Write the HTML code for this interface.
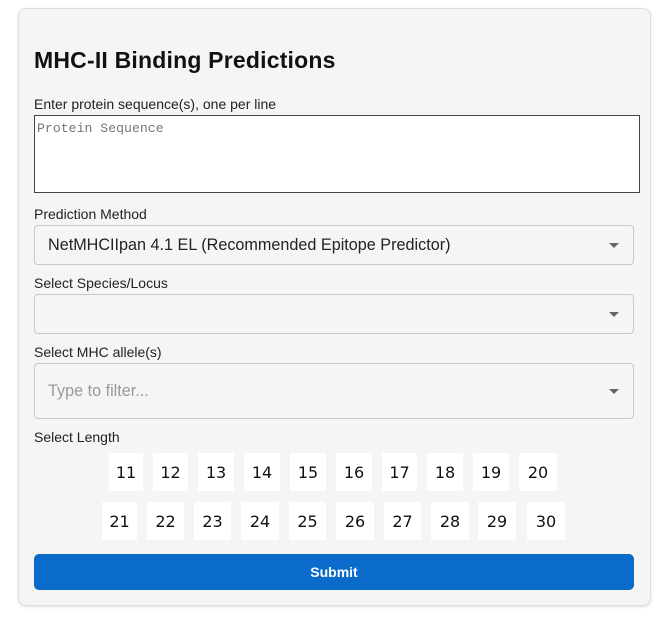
<!DOCTYPE html>
<html><head><style>
*{box-sizing:border-box;margin:0;padding:0}
body{width:666px;height:622px;background:#fff;font-family:"Liberation Sans",sans-serif;position:relative;overflow:hidden}
.card{position:absolute;left:18px;top:8px;width:633px;height:598px;background:#f5f5f5;border:1px solid #ddd;border-radius:8px;box-shadow:0 1px 3px rgba(0,0,0,.12)}
h1{position:absolute;left:34px;top:47px;font-size:23px;font-weight:bold;color:#111;font-family:"Liberation Sans",sans-serif;letter-spacing:0.2px}
.lbl{position:absolute;left:34px;font-size:14px;color:#222}
.ta{position:absolute;left:34px;top:115px;width:606px;height:78px;background:#fff;border:1px solid #444;font-family:"Liberation Mono",monospace;font-size:13.2px;color:#777;padding:5px 2px}
.sel{position:absolute;left:34px;width:600px;border:1px solid #c8c8c8;border-radius:4px;background:#f5f5f5;font-size:16.2px;color:#222;padding-left:13px;display:flex;align-items:center}
.sel::after{content:"";position:absolute;right:14px;top:50%;margin-top:-2px;border-left:5px solid transparent;border-right:5px solid transparent;border-top:5px solid #666}
.n{position:absolute;height:38px;background:#fff;font-size:16px;color:#111;display:flex;align-items:center;justify-content:center;font-family:"DejaVu Sans",sans-serif}
.btn{position:absolute;left:34px;top:554px;width:600px;height:36px;background:#0b6bcb;border-radius:5px;color:#fff;font-weight:bold;font-size:14px;display:flex;align-items:center;justify-content:center}
</style></head><body>
<div class="card"></div>
<h1>MHC-II Binding Predictions</h1>
<div class="lbl" style="top:96px">Enter protein sequence(s), one per line</div>
<div class="ta">Protein Sequence</div>
<div class="lbl" style="top:206px">Prediction Method</div>
<div class="sel" style="top:225px;height:40px">NetMHCIIpan 4.1 EL (Recommended Epitope Predictor)</div>
<div class="lbl" style="top:275px">Select Species/Locus</div>
<div class="sel" style="top:294px;height:40px"></div>
<div class="lbl" style="top:344px">Select MHC allele(s)</div>
<div class="sel" style="top:363px;height:56px;color:#999">Type to filter...</div>
<div class="lbl" style="top:429px">Select Length</div>
<div class="n" style="left:109px;top:453px;width:34px">11</div>
<div class="n" style="left:153px;top:453px;width:35px">12</div>
<div class="n" style="left:198px;top:453px;width:36px">13</div>
<div class="n" style="left:244px;top:453px;width:36px">14</div>
<div class="n" style="left:290px;top:453px;width:36px">15</div>
<div class="n" style="left:336px;top:453px;width:36px">16</div>
<div class="n" style="left:382px;top:453px;width:35px">17</div>
<div class="n" style="left:427px;top:453px;width:36px">18</div>
<div class="n" style="left:473px;top:453px;width:36px">19</div>
<div class="n" style="left:519px;top:453px;width:38px">20</div>
<div class="n" style="left:102px;top:502px;width:35px">21</div>
<div class="n" style="left:147px;top:502px;width:37px">22</div>
<div class="n" style="left:194px;top:502px;width:37px">23</div>
<div class="n" style="left:241px;top:502px;width:38px">24</div>
<div class="n" style="left:289px;top:502px;width:37px">25</div>
<div class="n" style="left:336px;top:502px;width:38px">26</div>
<div class="n" style="left:384px;top:502px;width:37px">27</div>
<div class="n" style="left:431px;top:502px;width:38px">28</div>
<div class="n" style="left:478px;top:502px;width:38px">29</div>
<div class="n" style="left:527px;top:502px;width:38px">30</div>
<div class="btn">Submit</div>
</body></html>
